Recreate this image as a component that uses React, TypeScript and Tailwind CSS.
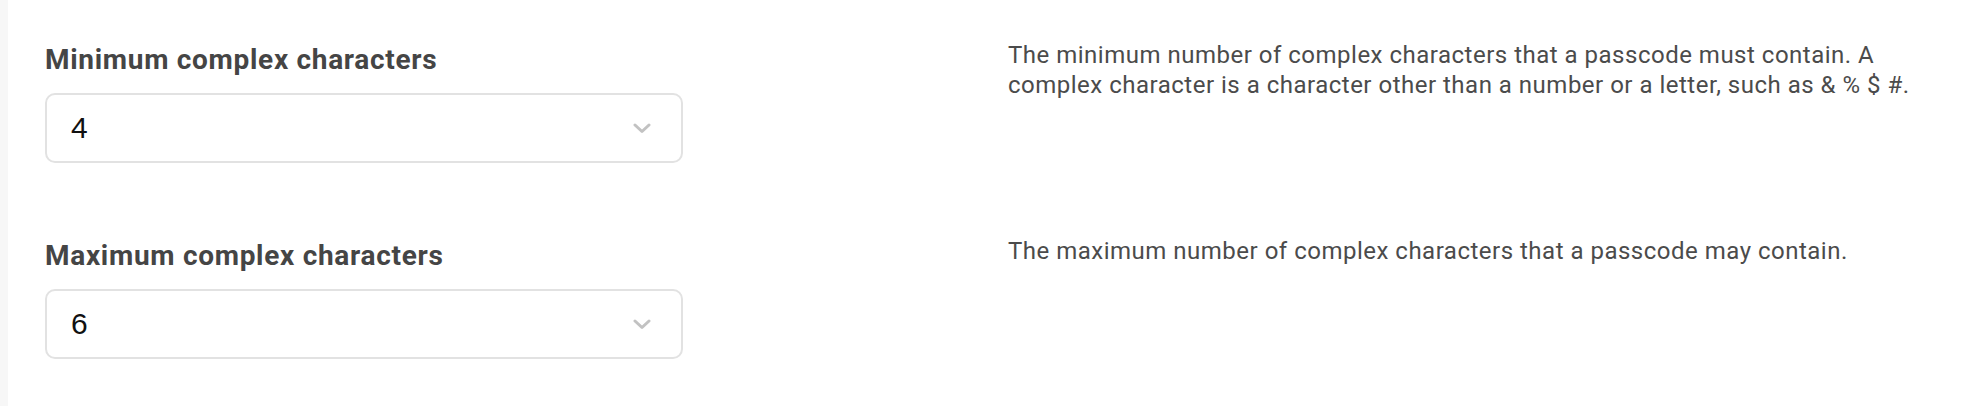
const ROWS = [
  {
    label: "Minimum complex characters",
    value: "4",
    help: "The minimum number of complex characters that a passcode must contain. A complex character is a character other than a number or a letter, such as & % $ #.",
  },
  {
    label: "Maximum complex characters",
    value: "6",
    help: "The maximum number of complex characters that a passcode may contain.",
  },
];

function Chevron() {
  return (
    <svg width="18" height="11" viewBox="0 0 18 11" fill="none" className="shrink-0">
      <path
        d="M2 2 L9 8.5 L16 2"
        stroke="#c2c2c2"
        strokeWidth="3"
        strokeLinecap="round"
        strokeLinejoin="round"
      />
    </svg>
  );
}

function SettingRow({ label, value, help }: { label: string; value: string; help: string }) {
  return (
    <div className="grid grid-cols-[638px_1fr] gap-x-[325px]">
      <div className="flex flex-col">
        <label className="mt-[4px] text-[28px] leading-[32px] font-bold text-[#454545] font-['Roboto',sans-serif] tracking-[0.7px]">
          {label}
        </label>
        <div className="mt-[17px] flex h-[70px] w-[638px] items-center justify-between rounded-[10px] border-2 border-[#e2e2e2] bg-white pl-[24px] pr-[30px]">
          <span className="text-[30px] leading-none text-[#111] font-['Liberation_Sans',Arial,sans-serif]">
            {value}
          </span>
          <Chevron />
        </div>
      </div>
      <p className="w-[912px] text-[24px] leading-[30px] text-[#4b4b4b] font-['Roboto',sans-serif] tracking-[0.5px]">
        {help}
      </p>
    </div>
  );
}

export default function App() {
  return (
    <div className="flex h-[406px] w-full bg-white">
      <div className="w-[8px] shrink-0 bg-[#f7f7f7]" />
      <div className="flex flex-col gap-[73px] pl-[37px] pt-[40px]">
        {ROWS.map((row) => (
          <SettingRow key={row.label} {...row} />
        ))}
      </div>
    </div>
  );
}
